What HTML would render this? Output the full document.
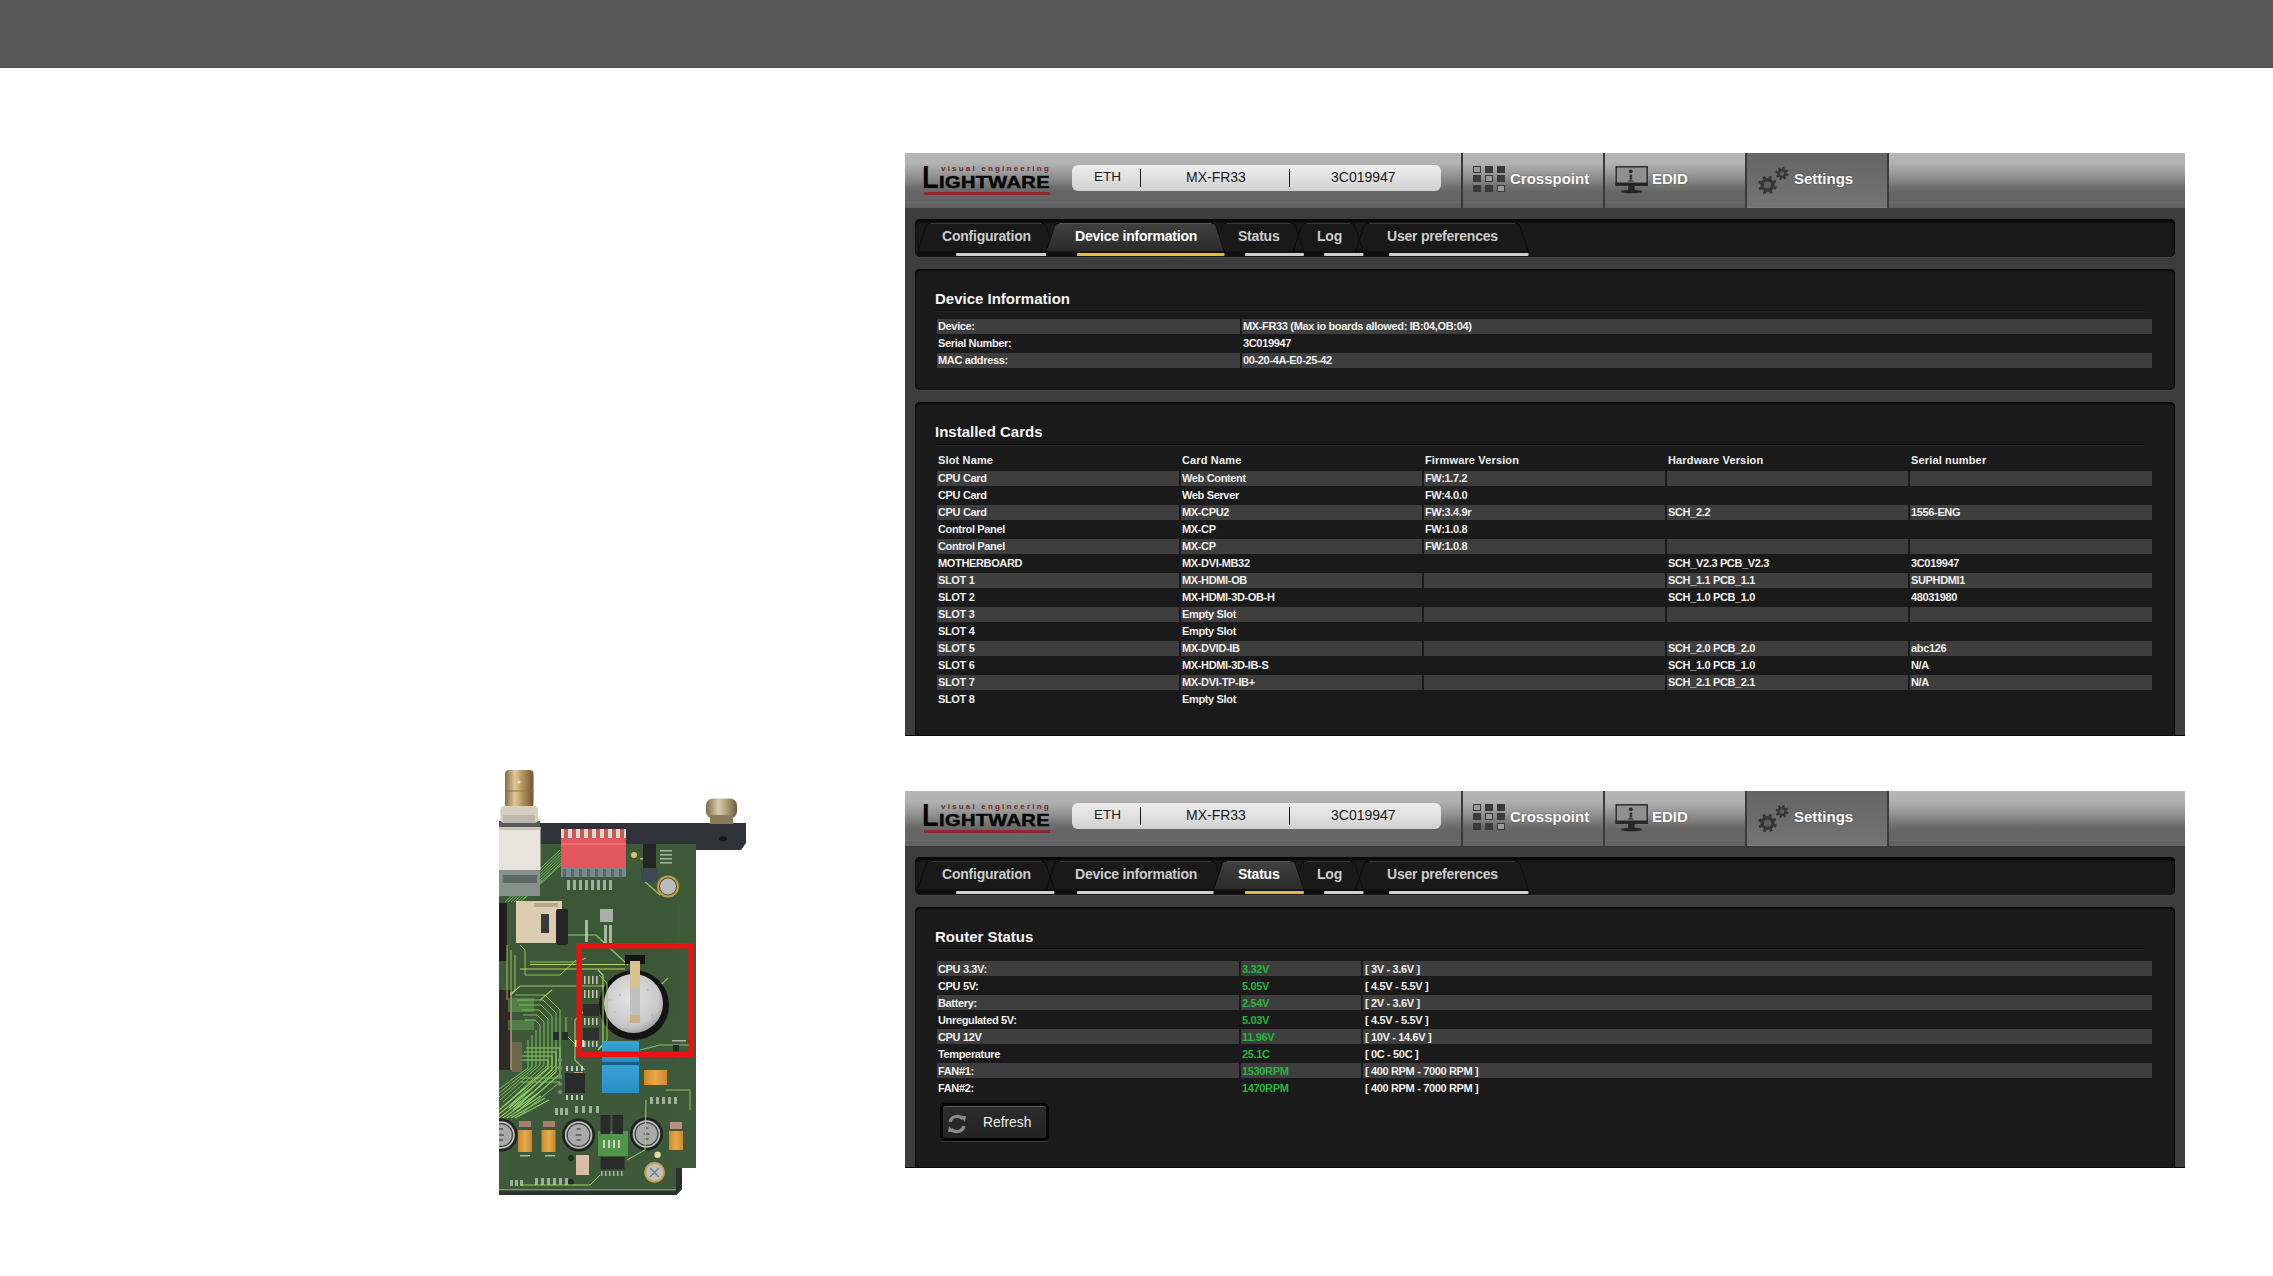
<!DOCTYPE html><html><head><meta charset="utf-8"><style>
*{margin:0;padding:0;box-sizing:border-box}
html,body{width:2273px;height:1276px;overflow:hidden;background:#fff}
body{position:relative;font-family:"Liberation Sans",sans-serif}
.abs{position:absolute}
.t{position:absolute;white-space:nowrap;line-height:1}
.hdr{background:linear-gradient(#b6b6b6 0%,#b2b2b2 18%,#9c9c9c 35%,#858585 50%,#707070 62%,#656565 72%,#646464 88%,#6c6c6c 89.5%,#636363 92%,#626262 100%)}
.sep{position:absolute;width:2px;background:#3a3a3a}
.pill{background:linear-gradient(#ececec 0%,#e2e2e2 45%,#cfcfcf 100%);border-radius:6px}
.navt{color:#fafafa;font-weight:bold;font-size:15px;text-shadow:0 0 2px rgba(0,0,0,.35)}
.tabbar{background:#191919;border-radius:5px;box-shadow:inset 0 3px 2px #060606,inset -1px 0 1px #0c0c0c,0 1px 0 #474747}
.tabt{font-weight:bold;font-size:14px;color:#d4d4d4;letter-spacing:-0.22px}
.panel{background:#1a1a1a;border-radius:5px;box-shadow:inset 0 2px 1px #090909,inset 1px 0 1px #0e0e0e,inset -1px 0 1px #0e0e0e,0 1px 0 #474747}
.h2{font-weight:bold;font-size:15px;color:#f4f4f4}
.rule{position:absolute;height:1px;background:#0c0c0c}
.bar{position:absolute;height:15px;background:#3e3e3e}
.ct{position:absolute;white-space:nowrap;line-height:1;font-weight:bold;font-size:11px;color:#f0f0f0;letter-spacing:-0.35px}
</style></head><body>

<div class="abs" style="left:0;top:0;width:2273px;height:67px;background:#575757"></div>
<div class="abs" style="left:0;top:67px;width:2273px;height:1px;background:#4d4d4d"></div>
<div class="abs" style="left:905px;top:153px;width:1280px;height:583px;background:#3c3c3c;overflow:hidden">
<div class="abs" style="left:-905px;top:-153px;width:2273px;height:1276px">
<div class="abs hdr" style="left:905px;top:153px;width:1280px;height:55px"></div>
<div class="t" style="left:922px;top:162px;font-weight:bold;font-size:31px;color:#050505;transform:scaleX(0.88);transform-origin:0 0">L</div>
<div class="t" style="left:939px;top:174px;font-weight:bold;font-size:16.5px;color:#080808;letter-spacing:0.3px;-webkit-text-stroke:0.5px #080808;transform:scaleX(1.215);transform-origin:0 0">IGHTWARE</div>
<div class="t" style="left:941px;top:165px;font-size:8px;color:#6a2a30;letter-spacing:2.2px;font-weight:bold">visual engineering</div>
<div class="abs" style="left:924px;top:192px;width:126px;height:3px;background:#8c2a30"></div>
<div class="abs pill" style="left:1072px;top:165px;width:369px;height:26px"></div>
<div class="abs" style="left:1140px;top:169px;width:1px;height:18px;background:#1a1a1a"></div>
<div class="abs" style="left:1289px;top:169px;width:1px;height:18px;background:#1a1a1a"></div>
<div class="t" style="left:1094px;top:170px;font-size:13.5px;color:#1a1a1a">ETH</div>
<div class="t" style="left:1186px;top:170px;font-size:14px;color:#1a1a1a">MX-FR33</div>
<div class="t" style="left:1331px;top:170px;font-size:14px;color:#1a1a1a">3C019947</div>
<div class="sep" style="left:1461px;top:153px;height:55px"></div>
<div class="sep" style="left:1603px;top:153px;height:55px"></div>
<div class="sep" style="left:1745px;top:153px;height:55px"></div>
<div class="sep" style="left:1887px;top:153px;height:55px"></div>
<div class="abs" style="left:1747px;top:153px;width:140px;height:55px;background:linear-gradient(#656565,#6e6e6e 60%,#747474);box-shadow:inset 0 -1px 0 #7a7a7a"></div>
<div class="abs" style="left:1473px;top:166.0px;width:8px;height:7px;border:1px solid #3a3a3a;background:#9a9a9a"></div>
<div class="abs" style="left:1485px;top:166.0px;width:8px;height:7px;background:#3a3a3a"></div>
<div class="abs" style="left:1497px;top:166.0px;width:8px;height:7px;background:#3a3a3a"></div>
<div class="abs" style="left:1473px;top:175.3px;width:8px;height:7px;background:#3a3a3a"></div>
<div class="abs" style="left:1485px;top:175.3px;width:8px;height:7px;border:1px solid #3a3a3a;background:#9a9a9a"></div>
<div class="abs" style="left:1497px;top:175.3px;width:8px;height:7px;background:#3a3a3a"></div>
<div class="abs" style="left:1473px;top:184.6px;width:8px;height:7px;background:#3a3a3a"></div>
<div class="abs" style="left:1485px;top:184.6px;width:8px;height:7px;background:#3a3a3a"></div>
<div class="abs" style="left:1497px;top:184.6px;width:8px;height:7px;border:1px solid #3a3a3a;background:#9a9a9a"></div>
<div class="t navt" style="left:1510px;top:171px">Crosspoint</div>
<svg class="abs" style="left:1615px;top:166px" width="33" height="28" viewBox="0 0 33 28"><rect x="1.2" y="0.8" width="31" height="18" fill="#909090" stroke="#262626" stroke-width="1.4"/><rect x="0.5" y="16.5" width="32.4" height="3.4" fill="#262626"/><rect x="13.2" y="19.5" width="6.5" height="5" fill="#262626"/><ellipse cx="16.5" cy="25.5" rx="10.8" ry="1.8" fill="#262626"/><circle cx="15.8" cy="5.3" r="1.9" fill="#2a2a2a"/><rect x="14.6" y="8.6" width="2.6" height="5" fill="#333"/><path d="M12 15.5 Q15.8 12.5 19.6 15.5 Z" fill="#2a2a2a"/></svg>
<div class="t navt" style="left:1652px;top:171px">EDID</div>
<svg class="abs" style="left:1756px;top:166px" width="36" height="30" viewBox="0 0 36 30"><g transform="rotate(20 11.5 19)"><g fill="#363636"><circle cx="11.5" cy="19" r="7"/></g><g stroke="#363636" stroke-width="3"><path d="M11.5 9.6V28.4M2.1 19H20.9M4.9 12.4L18.1 25.6M4.9 25.6L18.1 12.4"/></g></g><circle cx="11.5" cy="19" r="3.6" fill="#5e5e5e"/><g transform="rotate(15 26 7.5)"><circle cx="26" cy="7.5" r="4.6" fill="#363636"/><g stroke="#363636" stroke-width="2.4"><path d="M26 1V14M19.5 7.5H32.5M21.4 2.9L30.6 12.1M21.4 12.1L30.6 2.9"/></g></g><circle cx="26" cy="7.5" r="2.2" fill="#5e5e5e"/></svg>
<div class="t navt" style="left:1794px;top:171px">Settings</div>
<div class="abs tabbar" style="left:915px;top:219px;width:1260px;height:38px"></div>
<svg class="abs" style="left:905px;top:219px" width="1280" height="40" viewBox="905 219 1280 40"><defs><linearGradient id="tgI{ty}" x1="0" y1="0" x2="0" y2="1"><stop offset="0" stop-color="#2d2d2d"/><stop offset=".5" stop-color="#1f1f1f"/><stop offset="1" stop-color="#161616"/></linearGradient><linearGradient id="tgA219" x1="0" y1="0" x2="0" y2="1"><stop offset="0" stop-color="#404040"/><stop offset="1" stop-color="#2a2a2a"/></linearGradient></defs><path d="M1355.5,252 L1363.9,226.5 Q1365.0,223 1369.0,223 L1515.0,223 Q1519.0,223 1520.1,226.5 L1528.5,252 Z" fill="url(#tgI219)" stroke="#0b0b0b" stroke-width="1"/><path d="M1369.0,223.5 L1515.0,223.5" stroke="#3a3a3a" stroke-width="1"/><rect x="1355.5" y="252" width="173.0" height="4" fill="#0e0e0e"/><rect x="1389" y="253" width="139.5" height="3" rx="1" fill="#cfcfcf"/><path d="M1293.0,252 L1301.4,226.5 Q1302.5,223 1306.5,223 L1350.0,223 Q1354.0,223 1355.1,226.5 L1363.5,252 Z" fill="url(#tgI219)" stroke="#0b0b0b" stroke-width="1"/><path d="M1306.5,223.5 L1350.0,223.5" stroke="#3a3a3a" stroke-width="1"/><rect x="1293.0" y="252" width="70.5" height="4" fill="#0e0e0e"/><rect x="1324" y="253" width="39.5" height="3" rx="1" fill="#cfcfcf"/><path d="M1213.5,252 L1221.9,226.5 Q1223.0,223 1227.0,223 L1290.5,223 Q1294.5,223 1295.6,226.5 L1304.0,252 Z" fill="url(#tgI219)" stroke="#0b0b0b" stroke-width="1"/><path d="M1227.0,223.5 L1290.5,223.5" stroke="#3a3a3a" stroke-width="1"/><rect x="1213.5" y="252" width="90.5" height="4" fill="#0e0e0e"/><rect x="1245" y="253" width="59.0" height="3" rx="1" fill="#cfcfcf"/><path d="M917.5,252 L925.9,226.5 Q927.0,223 931.0,223 L1041.0,223 Q1045.0,223 1046.1,226.5 L1054.5,252 Z" fill="url(#tgI219)" stroke="#0b0b0b" stroke-width="1"/><path d="M931.0,223.5 L1041.0,223.5" stroke="#3a3a3a" stroke-width="1"/><rect x="917.5" y="252" width="137.0" height="4" fill="#0e0e0e"/><rect x="956" y="253" width="98.5" height="3" rx="1" fill="#cfcfcf"/><path d="M1046.0,252 L1054.4,226.5 Q1055.5,223 1059.5,223 L1211.0,223 Q1215.0,223 1216.1,226.5 L1224.5,252 Z" fill="url(#tgA219)" stroke="#0b0b0b" stroke-width="1"/><path d="M1059.5,223.5 L1211.0,223.5" stroke="#555" stroke-width="1"/><rect x="1046.0" y="252" width="178.5" height="4" fill="#0e0e0e"/><rect x="1077" y="253" width="147.5" height="3" rx="1" fill="#e6bb3c"/></svg>
<div class="t tabt" style="left:1387px;top:229px;color:#cccccc">User preferences</div>
<div class="t tabt" style="left:1317px;top:229px;color:#cccccc">Log</div>
<div class="t tabt" style="left:1238px;top:229px;color:#cccccc">Status</div>
<div class="t tabt" style="left:942px;top:229px;color:#cccccc">Configuration</div>
<div class="t tabt" style="left:1075px;top:229px;color:#ffffff">Device information</div>
<div class="abs panel" style="left:915px;top:269px;width:1260px;height:121px"></div>
<div class="t h2" style="left:935px;top:291px">Device Information</div>
<div class="rule" style="left:935px;top:310px;width:1209px"></div>
<div class="abs" style="left:935px;top:311px;width:1209px;height:1px;background:#2a2a2a"></div>
<div class="bar" style="left:937px;top:319px;width:303px"></div>
<div class="bar" style="left:1242px;top:319px;width:910px"></div>
<div class="ct" style="left:938px;top:321.4px">Device:</div>
<div class="ct" style="left:1243px;top:321.4px">MX-FR33 (Max io boards allowed: IB:04,OB:04)</div>
<div class="ct" style="left:938px;top:338.4px">Serial Number:</div>
<div class="ct" style="left:1243px;top:338.4px">3C019947</div>
<div class="bar" style="left:937px;top:353px;width:303px"></div>
<div class="bar" style="left:1242px;top:353px;width:910px"></div>
<div class="ct" style="left:938px;top:355.4px">MAC address:</div>
<div class="ct" style="left:1243px;top:355.4px">00-20-4A-E0-25-42</div>
<div class="abs panel" style="left:915px;top:402px;width:1260px;height:340px"></div>
<div class="t h2" style="left:935px;top:424px">Installed Cards</div>
<div class="rule" style="left:935px;top:444px;width:1209px"></div>
<div class="abs" style="left:935px;top:445px;width:1209px;height:1px;background:#262626"></div>
<div class="ct" style="left:938px;top:455px;letter-spacing:0.15px">Slot Name</div>
<div class="ct" style="left:1182px;top:455px;letter-spacing:0.15px">Card Name</div>
<div class="ct" style="left:1425px;top:455px;letter-spacing:0.15px">Firmware Version</div>
<div class="ct" style="left:1668px;top:455px;letter-spacing:0.15px">Hardware Version</div>
<div class="ct" style="left:1911px;top:455px;letter-spacing:0.15px">Serial number</div>
<div class="bar" style="left:937px;top:471px;width:242px"></div>
<div class="bar" style="left:1181px;top:471px;width:241px"></div>
<div class="bar" style="left:1424px;top:471px;width:241px"></div>
<div class="bar" style="left:1667px;top:471px;width:241px"></div>
<div class="bar" style="left:1910px;top:471px;width:242px"></div>
<div class="ct" style="left:938px;top:472.8px">CPU Card</div>
<div class="ct" style="left:1182px;top:472.8px">Web Content</div>
<div class="ct" style="left:1425px;top:472.8px">FW:1.7.2</div>
<div class="ct" style="left:938px;top:489.8px">CPU Card</div>
<div class="ct" style="left:1182px;top:489.8px">Web Server</div>
<div class="ct" style="left:1425px;top:489.8px">FW:4.0.0</div>
<div class="bar" style="left:937px;top:505px;width:242px"></div>
<div class="bar" style="left:1181px;top:505px;width:241px"></div>
<div class="bar" style="left:1424px;top:505px;width:241px"></div>
<div class="bar" style="left:1667px;top:505px;width:241px"></div>
<div class="bar" style="left:1910px;top:505px;width:242px"></div>
<div class="ct" style="left:938px;top:506.8px">CPU Card</div>
<div class="ct" style="left:1182px;top:506.8px">MX-CPU2</div>
<div class="ct" style="left:1425px;top:506.8px">FW:3.4.9r</div>
<div class="ct" style="left:1668px;top:506.8px">SCH_2.2</div>
<div class="ct" style="left:1911px;top:506.8px">1556-ENG</div>
<div class="ct" style="left:938px;top:523.8px">Control Panel</div>
<div class="ct" style="left:1182px;top:523.8px">MX-CP</div>
<div class="ct" style="left:1425px;top:523.8px">FW:1.0.8</div>
<div class="bar" style="left:937px;top:539px;width:242px"></div>
<div class="bar" style="left:1181px;top:539px;width:241px"></div>
<div class="bar" style="left:1424px;top:539px;width:241px"></div>
<div class="bar" style="left:1667px;top:539px;width:241px"></div>
<div class="bar" style="left:1910px;top:539px;width:242px"></div>
<div class="ct" style="left:938px;top:540.8px">Control Panel</div>
<div class="ct" style="left:1182px;top:540.8px">MX-CP</div>
<div class="ct" style="left:1425px;top:540.8px">FW:1.0.8</div>
<div class="ct" style="left:938px;top:557.8px">MOTHERBOARD</div>
<div class="ct" style="left:1182px;top:557.8px">MX-DVI-MB32</div>
<div class="ct" style="left:1668px;top:557.8px">SCH_V2.3 PCB_V2.3</div>
<div class="ct" style="left:1911px;top:557.8px">3C019947</div>
<div class="bar" style="left:937px;top:573px;width:242px"></div>
<div class="bar" style="left:1181px;top:573px;width:241px"></div>
<div class="bar" style="left:1424px;top:573px;width:241px"></div>
<div class="bar" style="left:1667px;top:573px;width:241px"></div>
<div class="bar" style="left:1910px;top:573px;width:242px"></div>
<div class="ct" style="left:938px;top:574.8px">SLOT 1</div>
<div class="ct" style="left:1182px;top:574.8px">MX-HDMI-OB</div>
<div class="ct" style="left:1668px;top:574.8px">SCH_1.1 PCB_1.1</div>
<div class="ct" style="left:1911px;top:574.8px">SUPHDMI1</div>
<div class="ct" style="left:938px;top:591.8px">SLOT 2</div>
<div class="ct" style="left:1182px;top:591.8px">MX-HDMI-3D-OB-H</div>
<div class="ct" style="left:1668px;top:591.8px">SCH_1.0 PCB_1.0</div>
<div class="ct" style="left:1911px;top:591.8px">48031980</div>
<div class="bar" style="left:937px;top:607px;width:242px"></div>
<div class="bar" style="left:1181px;top:607px;width:241px"></div>
<div class="bar" style="left:1424px;top:607px;width:241px"></div>
<div class="bar" style="left:1667px;top:607px;width:241px"></div>
<div class="bar" style="left:1910px;top:607px;width:242px"></div>
<div class="ct" style="left:938px;top:608.8px">SLOT 3</div>
<div class="ct" style="left:1182px;top:608.8px">Empty Slot</div>
<div class="ct" style="left:938px;top:625.8px">SLOT 4</div>
<div class="ct" style="left:1182px;top:625.8px">Empty Slot</div>
<div class="bar" style="left:937px;top:641px;width:242px"></div>
<div class="bar" style="left:1181px;top:641px;width:241px"></div>
<div class="bar" style="left:1424px;top:641px;width:241px"></div>
<div class="bar" style="left:1667px;top:641px;width:241px"></div>
<div class="bar" style="left:1910px;top:641px;width:242px"></div>
<div class="ct" style="left:938px;top:642.8px">SLOT 5</div>
<div class="ct" style="left:1182px;top:642.8px">MX-DVID-IB</div>
<div class="ct" style="left:1668px;top:642.8px">SCH_2.0 PCB_2.0</div>
<div class="ct" style="left:1911px;top:642.8px">abc126</div>
<div class="ct" style="left:938px;top:659.8px">SLOT 6</div>
<div class="ct" style="left:1182px;top:659.8px">MX-HDMI-3D-IB-S</div>
<div class="ct" style="left:1668px;top:659.8px">SCH_1.0 PCB_1.0</div>
<div class="ct" style="left:1911px;top:659.8px">N/A</div>
<div class="bar" style="left:937px;top:675px;width:242px"></div>
<div class="bar" style="left:1181px;top:675px;width:241px"></div>
<div class="bar" style="left:1424px;top:675px;width:241px"></div>
<div class="bar" style="left:1667px;top:675px;width:241px"></div>
<div class="bar" style="left:1910px;top:675px;width:242px"></div>
<div class="ct" style="left:938px;top:676.8px">SLOT 7</div>
<div class="ct" style="left:1182px;top:676.8px">MX-DVI-TP-IB+</div>
<div class="ct" style="left:1668px;top:676.8px">SCH_2.1 PCB_2.1</div>
<div class="ct" style="left:1911px;top:676.8px">N/A</div>
<div class="ct" style="left:938px;top:693.8px">SLOT 8</div>
<div class="ct" style="left:1182px;top:693.8px">Empty Slot</div>
</div></div>
<div class="abs" style="left:905px;top:735px;width:1280px;height:1px;background:#080808"></div>
<div class="abs" style="left:905px;top:791px;width:1280px;height:377px;background:#3c3c3c;overflow:hidden">
<div class="abs" style="left:-905px;top:-791px;width:2273px;height:1276px">
<div class="abs hdr" style="left:905px;top:791px;width:1280px;height:55px"></div>
<div class="t" style="left:922px;top:800px;font-weight:bold;font-size:31px;color:#050505;transform:scaleX(0.88);transform-origin:0 0">L</div>
<div class="t" style="left:939px;top:812px;font-weight:bold;font-size:16.5px;color:#080808;letter-spacing:0.3px;-webkit-text-stroke:0.5px #080808;transform:scaleX(1.215);transform-origin:0 0">IGHTWARE</div>
<div class="t" style="left:941px;top:803px;font-size:8px;color:#6a2a30;letter-spacing:2.2px;font-weight:bold">visual engineering</div>
<div class="abs" style="left:924px;top:830px;width:126px;height:3px;background:#8c2a30"></div>
<div class="abs pill" style="left:1072px;top:803px;width:369px;height:26px"></div>
<div class="abs" style="left:1140px;top:807px;width:1px;height:18px;background:#1a1a1a"></div>
<div class="abs" style="left:1289px;top:807px;width:1px;height:18px;background:#1a1a1a"></div>
<div class="t" style="left:1094px;top:808px;font-size:13.5px;color:#1a1a1a">ETH</div>
<div class="t" style="left:1186px;top:808px;font-size:14px;color:#1a1a1a">MX-FR33</div>
<div class="t" style="left:1331px;top:808px;font-size:14px;color:#1a1a1a">3C019947</div>
<div class="sep" style="left:1461px;top:791px;height:55px"></div>
<div class="sep" style="left:1603px;top:791px;height:55px"></div>
<div class="sep" style="left:1745px;top:791px;height:55px"></div>
<div class="sep" style="left:1887px;top:791px;height:55px"></div>
<div class="abs" style="left:1747px;top:791px;width:140px;height:55px;background:linear-gradient(#656565,#6e6e6e 60%,#747474);box-shadow:inset 0 -1px 0 #7a7a7a"></div>
<div class="abs" style="left:1473px;top:804.0px;width:8px;height:7px;border:1px solid #3a3a3a;background:#9a9a9a"></div>
<div class="abs" style="left:1485px;top:804.0px;width:8px;height:7px;background:#3a3a3a"></div>
<div class="abs" style="left:1497px;top:804.0px;width:8px;height:7px;background:#3a3a3a"></div>
<div class="abs" style="left:1473px;top:813.3px;width:8px;height:7px;background:#3a3a3a"></div>
<div class="abs" style="left:1485px;top:813.3px;width:8px;height:7px;border:1px solid #3a3a3a;background:#9a9a9a"></div>
<div class="abs" style="left:1497px;top:813.3px;width:8px;height:7px;background:#3a3a3a"></div>
<div class="abs" style="left:1473px;top:822.6px;width:8px;height:7px;background:#3a3a3a"></div>
<div class="abs" style="left:1485px;top:822.6px;width:8px;height:7px;background:#3a3a3a"></div>
<div class="abs" style="left:1497px;top:822.6px;width:8px;height:7px;border:1px solid #3a3a3a;background:#9a9a9a"></div>
<div class="t navt" style="left:1510px;top:809px">Crosspoint</div>
<svg class="abs" style="left:1615px;top:804px" width="33" height="28" viewBox="0 0 33 28"><rect x="1.2" y="0.8" width="31" height="18" fill="#909090" stroke="#262626" stroke-width="1.4"/><rect x="0.5" y="16.5" width="32.4" height="3.4" fill="#262626"/><rect x="13.2" y="19.5" width="6.5" height="5" fill="#262626"/><ellipse cx="16.5" cy="25.5" rx="10.8" ry="1.8" fill="#262626"/><circle cx="15.8" cy="5.3" r="1.9" fill="#2a2a2a"/><rect x="14.6" y="8.6" width="2.6" height="5" fill="#333"/><path d="M12 15.5 Q15.8 12.5 19.6 15.5 Z" fill="#2a2a2a"/></svg>
<div class="t navt" style="left:1652px;top:809px">EDID</div>
<svg class="abs" style="left:1756px;top:804px" width="36" height="30" viewBox="0 0 36 30"><g transform="rotate(20 11.5 19)"><g fill="#363636"><circle cx="11.5" cy="19" r="7"/></g><g stroke="#363636" stroke-width="3"><path d="M11.5 9.6V28.4M2.1 19H20.9M4.9 12.4L18.1 25.6M4.9 25.6L18.1 12.4"/></g></g><circle cx="11.5" cy="19" r="3.6" fill="#5e5e5e"/><g transform="rotate(15 26 7.5)"><circle cx="26" cy="7.5" r="4.6" fill="#363636"/><g stroke="#363636" stroke-width="2.4"><path d="M26 1V14M19.5 7.5H32.5M21.4 2.9L30.6 12.1M21.4 12.1L30.6 2.9"/></g></g><circle cx="26" cy="7.5" r="2.2" fill="#5e5e5e"/></svg>
<div class="t navt" style="left:1794px;top:809px">Settings</div>
<div class="abs tabbar" style="left:915px;top:857px;width:1260px;height:38px"></div>
<svg class="abs" style="left:905px;top:857px" width="1280" height="40" viewBox="905 857 1280 40"><defs><linearGradient id="tgI{ty}" x1="0" y1="0" x2="0" y2="1"><stop offset="0" stop-color="#2d2d2d"/><stop offset=".5" stop-color="#1f1f1f"/><stop offset="1" stop-color="#161616"/></linearGradient><linearGradient id="tgA857" x1="0" y1="0" x2="0" y2="1"><stop offset="0" stop-color="#404040"/><stop offset="1" stop-color="#2a2a2a"/></linearGradient></defs><path d="M1355.5,890 L1363.9,864.5 Q1365.0,861 1369.0,861 L1515.0,861 Q1519.0,861 1520.1,864.5 L1528.5,890 Z" fill="url(#tgI857)" stroke="#0b0b0b" stroke-width="1"/><path d="M1369.0,861.5 L1515.0,861.5" stroke="#3a3a3a" stroke-width="1"/><rect x="1355.5" y="890" width="173.0" height="4" fill="#0e0e0e"/><rect x="1389" y="891" width="139.5" height="3" rx="1" fill="#cfcfcf"/><path d="M1293.0,890 L1301.4,864.5 Q1302.5,861 1306.5,861 L1350.0,861 Q1354.0,861 1355.1,864.5 L1363.5,890 Z" fill="url(#tgI857)" stroke="#0b0b0b" stroke-width="1"/><path d="M1306.5,861.5 L1350.0,861.5" stroke="#3a3a3a" stroke-width="1"/><rect x="1293.0" y="890" width="70.5" height="4" fill="#0e0e0e"/><rect x="1324" y="891" width="39.5" height="3" rx="1" fill="#cfcfcf"/><path d="M1046.0,890 L1054.4,864.5 Q1055.5,861 1059.5,861 L1211.0,861 Q1215.0,861 1216.1,864.5 L1224.5,890 Z" fill="url(#tgI857)" stroke="#0b0b0b" stroke-width="1"/><path d="M1059.5,861.5 L1211.0,861.5" stroke="#3a3a3a" stroke-width="1"/><rect x="1046.0" y="890" width="178.5" height="4" fill="#0e0e0e"/><rect x="1077" y="891" width="147.5" height="3" rx="1" fill="#cfcfcf"/><path d="M917.5,890 L925.9,864.5 Q927.0,861 931.0,861 L1041.0,861 Q1045.0,861 1046.1,864.5 L1054.5,890 Z" fill="url(#tgI857)" stroke="#0b0b0b" stroke-width="1"/><path d="M931.0,861.5 L1041.0,861.5" stroke="#3a3a3a" stroke-width="1"/><rect x="917.5" y="890" width="137.0" height="4" fill="#0e0e0e"/><rect x="956" y="891" width="98.5" height="3" rx="1" fill="#cfcfcf"/><path d="M1213.5,890 L1221.9,864.5 Q1223.0,861 1227.0,861 L1290.5,861 Q1294.5,861 1295.6,864.5 L1304.0,890 Z" fill="url(#tgA857)" stroke="#0b0b0b" stroke-width="1"/><path d="M1227.0,861.5 L1290.5,861.5" stroke="#555" stroke-width="1"/><rect x="1213.5" y="890" width="90.5" height="4" fill="#0e0e0e"/><rect x="1245" y="891" width="59.0" height="3" rx="1" fill="#e6bb3c"/></svg>
<div class="t tabt" style="left:1387px;top:867px;color:#cccccc">User preferences</div>
<div class="t tabt" style="left:1317px;top:867px;color:#cccccc">Log</div>
<div class="t tabt" style="left:1075px;top:867px;color:#cccccc">Device information</div>
<div class="t tabt" style="left:942px;top:867px;color:#cccccc">Configuration</div>
<div class="t tabt" style="left:1238px;top:867px;color:#ffffff">Status</div>
<div class="abs panel" style="left:915px;top:907px;width:1260px;height:270px"></div>
<div class="t h2" style="left:935px;top:929px">Router Status</div>
<div class="rule" style="left:935px;top:948px;width:1209px"></div>
<div class="abs" style="left:935px;top:949px;width:1209px;height:1px;background:#262626"></div>
<div class="bar" style="left:937px;top:961px;width:302px"></div>
<div class="bar" style="left:1241px;top:961px;width:120px"></div>
<div class="bar" style="left:1363px;top:961px;width:789px"></div>
<div class="ct" style="left:938px;top:963.5px">CPU 3.3V:</div>
<div class="ct" style="left:1242px;top:963.5px;color:#27b43c">3.32V</div>
<div class="ct" style="left:1365px;top:963.5px">[ 3V - 3.6V ]</div>
<div class="ct" style="left:938px;top:980.5px">CPU 5V:</div>
<div class="ct" style="left:1242px;top:980.5px;color:#27b43c">5.05V</div>
<div class="ct" style="left:1365px;top:980.5px">[ 4.5V - 5.5V ]</div>
<div class="bar" style="left:937px;top:995px;width:302px"></div>
<div class="bar" style="left:1241px;top:995px;width:120px"></div>
<div class="bar" style="left:1363px;top:995px;width:789px"></div>
<div class="ct" style="left:938px;top:997.5px">Battery:</div>
<div class="ct" style="left:1242px;top:997.5px;color:#27b43c">2.54V</div>
<div class="ct" style="left:1365px;top:997.5px">[ 2V - 3.6V ]</div>
<div class="ct" style="left:938px;top:1014.5px">Unregulated 5V:</div>
<div class="ct" style="left:1242px;top:1014.5px;color:#27b43c">5.03V</div>
<div class="ct" style="left:1365px;top:1014.5px">[ 4.5V - 5.5V ]</div>
<div class="bar" style="left:937px;top:1029px;width:302px"></div>
<div class="bar" style="left:1241px;top:1029px;width:120px"></div>
<div class="bar" style="left:1363px;top:1029px;width:789px"></div>
<div class="ct" style="left:938px;top:1031.5px">CPU 12V</div>
<div class="ct" style="left:1242px;top:1031.5px;color:#27b43c">11.96V</div>
<div class="ct" style="left:1365px;top:1031.5px">[ 10V - 14.6V ]</div>
<div class="ct" style="left:938px;top:1048.5px">Temperature</div>
<div class="ct" style="left:1242px;top:1048.5px;color:#27b43c">25.1C</div>
<div class="ct" style="left:1365px;top:1048.5px">[ 0C - 50C ]</div>
<div class="bar" style="left:937px;top:1063px;width:302px"></div>
<div class="bar" style="left:1241px;top:1063px;width:120px"></div>
<div class="bar" style="left:1363px;top:1063px;width:789px"></div>
<div class="ct" style="left:938px;top:1065.5px">FAN#1:</div>
<div class="ct" style="left:1242px;top:1065.5px;color:#27b43c">1530RPM</div>
<div class="ct" style="left:1365px;top:1065.5px">[ 400 RPM - 7000 RPM ]</div>
<div class="ct" style="left:938px;top:1082.5px">FAN#2:</div>
<div class="ct" style="left:1242px;top:1082.5px;color:#27b43c">1470RPM</div>
<div class="ct" style="left:1365px;top:1082.5px">[ 400 RPM - 7000 RPM ]</div>
<div class="abs" style="left:940px;top:1103px;width:109px;height:38px;background:#050505;border-radius:5px"></div>
<div class="abs" style="left:943px;top:1106px;width:103px;height:32px;background:linear-gradient(#2c2c2c,#232323);border-radius:3px;box-shadow:inset 0 1px 0 #5a5a5a"></div>
<div class="abs" style="left:941px;top:1141px;width:107px;height:1px;background:#3a3a3a"></div>
<svg class="abs" style="left:946px;top:1113px" width="22" height="22" viewBox="0 0 22 22"><g fill="none" stroke="#8a8a8a" stroke-width="3.2"><path d="M4 9A7.5 7.5 0 0 1 17 6"/><path d="M18 13A7.5 7.5 0 0 1 5 16"/></g><path d="M14 3L20 3L19 9Z" fill="#8a8a8a"/><path d="M8 19L2 19L3 13Z" fill="#8a8a8a"/></svg>
<div class="t" style="left:983px;top:1116px;font-size:13.8px;color:#ececec">Refresh</div>
</div></div>
<div class="abs" style="left:905px;top:1167px;width:1280px;height:1px;background:#080808"></div>

<svg class="abs" style="left:490px;top:760px" width="270" height="445" viewBox="490 760 270 445">
<defs>
<linearGradient id="gold" x1="0" y1="0" x2="1" y2="0"><stop offset="0" stop-color="#8a6e40"/><stop offset=".35" stop-color="#e0c89a"/><stop offset=".6" stop-color="#b89660"/><stop offset="1" stop-color="#6e5430"/></linearGradient>
<linearGradient id="brass" x1="0" y1="0" x2="1" y2="0"><stop offset="0" stop-color="#7a6a48"/><stop offset=".4" stop-color="#d8ccaa"/><stop offset=".7" stop-color="#a89870"/><stop offset="1" stop-color="#6a5a40"/></linearGradient>
<radialGradient id="coin" cx=".45" cy=".4" r=".6"><stop offset="0" stop-color="#e4e4e4"/><stop offset=".8" stop-color="#c8c8c8"/><stop offset="1" stop-color="#a8a8a8"/></radialGradient>
<radialGradient id="ind" cx=".5" cy=".5" r=".5"><stop offset="0" stop-color="#8a8a8a"/><stop offset=".7" stop-color="#b4b4b4"/><stop offset=".85" stop-color="#444"/><stop offset="1" stop-color="#222"/></radialGradient>
<linearGradient id="blue" x1="0" y1="0" x2="0" y2="1"><stop offset="0" stop-color="#3aa2d4"/><stop offset="1" stop-color="#2c8cc4"/></linearGradient>
<linearGradient id="tant" x1="0" y1="0" x2="1" y2="0"><stop offset="0" stop-color="#c88a30"/><stop offset=".5" stop-color="#eaa848"/><stop offset="1" stop-color="#c88a30"/></linearGradient>
<clipPath id="board"><path d="M499 844 L696 844 L696 1168 L682 1168 L682 1189 L676 1195 L499 1195 Z"/></clipPath>
</defs>
<!-- board -->
<path d="M499 844 L696 844 L696 1168 L682 1168 L682 1189 L676 1195 L499 1195 Z" fill="#3e5a3a"/>
<g clip-path="url(#board)">
  <!-- darker bottom edge -->
  <rect x="499" y="1190" width="200" height="6" fill="#2a342c"/>
  <rect x="499" y="1189" width="180" height="1.5" fill="#9ab89a" opacity=".6"/>
  <rect x="676" y="1168" width="6" height="27" fill="#283028"/>
  <!-- left dark connector strips -->
  <rect x="499" y="903" width="8" height="58" fill="#1e1e1e"/>
  <rect x="499" y="990" width="12" height="80" fill="#2e2a26"/>
  <rect x="510" y="992" width="2" height="78" fill="#c89a8a" opacity=".7"/>
  <!-- diagonal traces top-left -->
  <g stroke="#8acc66" stroke-width="0.9" opacity=".85">
    <path d="M505 902 L560 850"/><path d="M508 902 L563 850"/><path d="M511 902 L566 850"/><path d="M514 902 L569 850"/><path d="M517 902 L572 850"/><path d="M520 902 L575 850"/><path d="M523 900 L577 850"/>
    <path d="M499 877 L540 877"/><path d="M499 881 L542 881"/><path d="M499 885 L538 885"/><path d="M499 889 L534 889"/><path d="M499 893 L530 893"/>
  </g>
  <!-- gray area under white block -->
  <rect x="499" y="870" width="41" height="26" fill="#86928c"/>
  <rect x="503" y="875" width="34" height="8" fill="#5e6a66"/>
  <!-- bright band -->
  <g stroke="#9ad86e" stroke-width="1.1" fill="none" opacity=".95">
    <path d="M520 1060 L548 1060 L548 1068 L505 1105"/><path d="M522 1056 L552 1056 L552 1070 L509 1108"/><path d="M524 1052 L556 1052 L556 1072 L513 1110"/><path d="M526 1048 L560 1048 L560 1074 L517 1112"/>
    <path d="M499 1110 L525 1088"/><path d="M499 1114 L529 1090"/><path d="M499 1118 L533 1092"/><path d="M503 1118 L537 1094"/><path d="M507 1118 L541 1096"/><path d="M511 1118 L545 1098"/><path d="M515 1118 L549 1100"/>
  </g>
  <rect x="508" y="998" width="26" height="14" fill="#6aa85a" opacity=".5"/>
  <rect x="508" y="1020" width="26" height="10" fill="#6aa85a" opacity=".45"/>
  <!-- big trace fan left -->
  <g stroke="#86c85e" stroke-width="1" fill="none" opacity=".9">
    <path d="M515 995 L545 995 L560 1010 L560 1065 L515 1110"/>
    <path d="M517 1000 L543 1000 L556 1013 L556 1065 L512 1108"/>
    <path d="M519 1005 L541 1005 L552 1016 L552 1065 L509 1106"/>
    <path d="M521 1010 L539 1010 L548 1019 L548 1065 L506 1104"/>
    <path d="M523 1015 L537 1015 L544 1022 L544 1065 L503 1102"/>
    <path d="M525 1020 L535 1020 L540 1025 L540 1065 L500 1100"/>
    <path d="M536 1030 L536 1066 L499 1097"/>
    <path d="M532 1035 L532 1067 L499 1093"/>
    <path d="M528 1040 L528 1068 L499 1089"/>
    <path d="M520 1082 L560 1082 L520 1115"/><path d="M520 1078 L562 1078"/>
  </g>
  <rect x="512" y="1042" width="10" height="30" fill="#7a6a50" opacity=".8"/>
  <!-- long horizontal traces -->
  <g stroke="#a8d870" stroke-width="1.2" fill="none" opacity=".85">
    <path d="M530 962 L576 962 L586 958"/>
    <path d="M512 993 L520 986 L660 986 L668 978"/>
    <path d="M540 1000 L552 990"/>
    <path d="M566 935 L596 935 L628 965"/>
    <path d="M643 880 L660 895"/>
    <path d="M590 1005 L575 1020 L575 1060 L585 1070"/>
  </g>
  <!-- small components rows -->
  <g fill="#c0ccc0" opacity=".75">
    <rect x="567" y="880" width="3" height="10"/><rect x="573" y="880" width="3" height="10"/><rect x="579" y="880" width="3" height="10"/><rect x="585" y="880" width="3" height="10"/><rect x="591" y="880" width="3" height="10"/><rect x="597" y="880" width="3" height="10"/><rect x="603" y="880" width="3" height="10"/><rect x="609" y="880" width="3" height="10"/>
    <rect x="555" y="1108" width="3" height="7"/><rect x="560" y="1108" width="3" height="7"/><rect x="565" y="1108" width="3" height="7"/><rect x="575" y="1106" width="3" height="7"/><rect x="582" y="1106" width="3" height="7"/><rect x="589" y="1106" width="3" height="7"/><rect x="596" y="1106" width="3" height="7"/>
    <rect x="510" y="1180" width="3" height="6"/><rect x="515" y="1180" width="3" height="6"/><rect x="520" y="1180" width="3" height="6"/><rect x="535" y="1178" width="3" height="7"/><rect x="541" y="1178" width="3" height="7"/><rect x="547" y="1178" width="3" height="7"/><rect x="553" y="1178" width="3" height="7"/><rect x="559" y="1178" width="3" height="7"/><rect x="565" y="1178" width="3" height="7"/>
    <rect x="650" y="1097" width="3" height="7"/><rect x="656" y="1097" width="3" height="7"/><rect x="662" y="1097" width="3" height="7"/><rect x="668" y="1097" width="3" height="7"/><rect x="674" y="1097" width="3" height="7"/>
  </g>
  <g stroke="#b8d868" stroke-width="1" fill="none" opacity=".8">
    <path d="M507 945 L507 1000"/><path d="M511 950 L511 995 L520 986"/><path d="M515 955 L515 990"/>
    <path d="M520 945 L525 950 L525 975 L560 975 L576 960"/>
    <path d="M566 1017 L566 1035 L576 1045"/>
    <path d="M640 1050 L660 1045 L690 1045"/><path d="M650 1055 L690 1055"/>
    <path d="M666 1090 L690 1090 L690 1110"/>
  </g>
  <g fill="#d8dcc8" opacity=".7">
    <rect x="640" y="858" width="8" height="1.5"/><rect x="660" y="850" width="12" height="1.5"/><rect x="660" y="854" width="12" height="1.5"/><rect x="660" y="858" width="12" height="1.5"/><rect x="660" y="862" width="12" height="1.5"/>
    <rect x="604" y="925" width="3" height="18"/><rect x="609" y="925" width="3" height="18"/><rect x="585" y="920" width="3" height="22"/>
    <rect x="672" y="1040" width="14" height="1.5"/><rect x="520" y="1155" width="10" height="1.5"/><rect x="545" y="1155" width="10" height="1.5"/>
  </g>
  <!-- microSD -->
  <rect x="516" y="901" width="46" height="42" fill="#dccdb0"/>
  <rect x="534" y="903" width="24" height="4" fill="#b8a88a"/>
  <rect x="541" y="914" width="8" height="19" fill="#3a3a3a"/>
  <rect x="556" y="909" width="12" height="36" rx="2" fill="#242424"/>
  <rect x="600" y="909" width="13" height="13" fill="#a8b0a8"/>
  <!-- screw top -->
  <circle cx="668" cy="886.5" r="11" fill="#c8a040"/><circle cx="668" cy="886.5" r="9" fill="#3a4a3a"/><circle cx="668" cy="886.5" r="8" fill="#b8bcbc"/>
  <circle cx="634" cy="855" r="3" fill="#e0c060"/>
  <!-- jumper -->
  <rect x="643" y="832" width="13" height="50" fill="#242424"/>
  <rect x="641" y="868" width="17" height="14" fill="#3a4a50"/>
  <!-- battery -->
  <circle cx="634" cy="1005" r="35" fill="#141414"/>
  <circle cx="633.5" cy="1003.5" r="29.5" fill="url(#coin)"/>
  <g fill="#a8a8a8" opacity=".5"><circle cx="620" cy="995" r="1.2"/><circle cx="648" cy="990" r="1.4"/><circle cx="615" cy="1012" r="1"/><circle cx="652" cy="1015" r="1.2"/><circle cx="628" cy="1025" r="1"/><circle cx="645" cy="1028" r="1.3"/><circle cx="610" cy="1000" r="1"/></g>
  <rect x="625" y="955" width="20" height="9" fill="#141414"/>
  <rect x="630" y="961" width="10" height="27" fill="#d8c090"/>
  <rect x="630" y="988" width="10" height="28" fill="#c0c0c0"/>
  <rect x="630" y="1015" width="10" height="8" fill="#c8b080"/>
  <!-- chips near battery -->
  <rect x="583" y="1004" width="16" height="12" fill="#2e302e"/>
  <rect x="583" y="1028" width="16" height="12" fill="#2e302e"/>
  <g fill="#d8d8c8" opacity=".85"><rect x="584" y="976" width="1.6" height="8"/><rect x="588" y="976" width="1.6" height="8"/><rect x="592" y="976" width="1.6" height="8"/><rect x="596" y="976" width="1.6" height="8"/><rect x="584" y="990" width="1.6" height="8"/><rect x="588" y="990" width="1.6" height="8"/><rect x="592" y="990" width="1.6" height="8"/><rect x="596" y="990" width="1.6" height="8"/><rect x="584" y="1018" width="1.6" height="7"/><rect x="588" y="1018" width="1.6" height="7"/><rect x="592" y="1018" width="1.6" height="7"/><rect x="596" y="1018" width="1.6" height="7"/><rect x="584" y="1041" width="1.6" height="6"/><rect x="588" y="1041" width="1.6" height="6"/><rect x="592" y="1041" width="1.6" height="6"/><rect x="596" y="1041" width="1.6" height="6"/></g>
  <g stroke="#c8e070" stroke-width="1.1" fill="none" opacity=".9"><path d="M530 964.5 L625 964.5"/><path d="M520 969 L625 969"/><path d="M598 970 L603 975 L603 1045 L598 1050"/></g>
  <path d="M599 975 L607 983 L607 1040 L599 1048" stroke="#8ac860" stroke-width="1" fill="none"/>
  <!-- blue caps -->
  <rect x="602" y="1041" width="37" height="21" fill="url(#blue)"/>
  <rect x="602" y="1065" width="37" height="28" fill="url(#blue)"/>
  <rect x="602" y="1062" width="37" height="3" fill="#1e5a88"/>
  <rect x="644" y="1070" width="23" height="15" fill="url(#tant)"/>
  <rect x="575" y="1040" width="9" height="7" fill="#e8e0d0"/>
  <rect x="574" y="1072" width="9" height="12" fill="#c8a060"/>
  <!-- IC left mid -->
  <rect x="565" y="1073" width="20" height="20" fill="#2a2a2a"/>
  <g fill="#e0e0e0" opacity=".8"><rect x="566" y="1066" width="2" height="5"/><rect x="571" y="1066" width="2" height="5"/><rect x="576" y="1066" width="2" height="5"/><rect x="581" y="1066" width="2" height="5"/><rect x="566" y="1095" width="2" height="5"/><rect x="571" y="1095" width="2" height="5"/><rect x="576" y="1095" width="2" height="5"/><rect x="581" y="1095" width="2" height="5"/></g>
  <g fill="#7a8a7a"><circle cx="560" cy="1060" r="2"/><circle cx="560" cy="1068" r="2"/><circle cx="560" cy="1076" r="2"/><circle cx="560" cy="1084" r="2"/><circle cx="560" cy="1092" r="2"/></g>
  <!-- small black parts -->
  <rect x="553" y="1032" width="6" height="8" fill="#2a2a2a"/><rect x="562" y="1032" width="6" height="8" fill="#2a2a2a"/>
  <rect x="673" y="1045" width="6" height="8" fill="#2a2a2a"/>
  <!-- inductors -->
  <circle cx="501" cy="1135" r="16.5" fill="#1c221c"/><circle cx="501" cy="1135" r="13.8" fill="#bdbdbd"/><circle cx="501" cy="1135" r="12" fill="#3a3a3a"/><circle cx="501" cy="1135" r="10.8" fill="#a9a9a9"/><path d="M499 1129 L503 1129 M498 1135 L504 1135 M499 1140 L503 1140" stroke="#555" stroke-width="1.5"/>
  <circle cx="578.6" cy="1135" r="16.5" fill="#1c221c"/><circle cx="578.6" cy="1135" r="13.8" fill="#bdbdbd"/><circle cx="578.6" cy="1135" r="12" fill="#3a3a3a"/><circle cx="578.6" cy="1135" r="10.8" fill="#a9a9a9"/><path d="M576.6 1129 L580.6 1129 M575.6 1135 L581.6 1135 M576.6 1140 L580.6 1140" stroke="#555" stroke-width="1.5"/>
  <circle cx="646.5" cy="1134" r="16.5" fill="#1c221c"/><circle cx="646.5" cy="1134" r="13.8" fill="#bdbdbd"/><circle cx="646.5" cy="1134" r="12" fill="#3a3a3a"/><circle cx="646.5" cy="1134" r="10.8" fill="#a9a9a9"/><path d="M644.5 1128 L648.5 1128 M643.5 1134 L649.5 1134 M644.5 1139 L648.5 1139" stroke="#555" stroke-width="1.5"/>

  <!-- tantalum -->
  <rect x="518" y="1130" width="14" height="22" fill="url(#tant)"/><rect x="519" y="1121" width="12" height="6" fill="#a88070"/>
  <rect x="541.5" y="1130" width="14" height="22" fill="url(#tant)"/><rect x="543" y="1121" width="12" height="6" fill="#a88070"/>
  <rect x="669" y="1131" width="14" height="19" fill="url(#tant)"/><rect x="670" y="1122" width="12" height="7" fill="#b89080"/>
  <!-- center bottom chips -->
  <rect x="598" y="1131" width="30" height="25" fill="#5aa850" opacity=".75"/>
  <rect x="600.5" y="1115" width="10" height="19" fill="#2a2a2a"/>
  <rect x="612.5" y="1115" width="10.5" height="19" fill="#2a2a2a"/>
  <g fill="#e8e8d8" opacity=".8"><rect x="603" y="1140" width="2" height="8"/><rect x="608" y="1140" width="2" height="8"/><rect x="613" y="1140" width="2" height="8"/><rect x="618" y="1140" width="2" height="8"/></g>
  <rect x="600.5" y="1157" width="24" height="12.5" fill="#2a2a2a"/>
  <g fill="#d8d8c8" opacity=".7"><rect x="601" y="1171" width="1.5" height="5"/><rect x="605" y="1171" width="1.5" height="5"/><rect x="609" y="1171" width="1.5" height="5"/><rect x="613" y="1171" width="1.5" height="5"/><rect x="617" y="1171" width="1.5" height="5"/><rect x="621" y="1171" width="1.5" height="5"/></g>
  <rect x="576" y="1155" width="13" height="20" fill="#d8bca8"/>
  <circle cx="571" cy="1158" r="3" fill="#242a24"/><circle cx="571" cy="1182" r="3" fill="#242a24"/>
  <path d="M627 1160 L645 1150 L646 1100" stroke="#9ad06a" stroke-width="1" fill="none"/>
  <path d="M520 1185 L590 1185 L600 1175" stroke="#9ad06a" stroke-width="1" fill="none"/>
  <!-- bottom screw -->
  <circle cx="657.6" cy="1154.7" r="3.2" fill="#e8d8a0"/>
  <circle cx="654.6" cy="1172.3" r="10.5" fill="#c8a040"/><circle cx="654.6" cy="1172.3" r="8.5" fill="#bfc0c0"/>
  <path d="M650 1168 L659 1177 M659 1168 L650 1177" stroke="#7a7a7a" stroke-width="1.4"/>
</g>
<!-- bracket -->
<path d="M540 823 L746 823 L746 843 L741 850 L696 850 L696 844 L540 844 Z" fill="#30333a"/>
<rect x="499" y="821" width="41" height="7" fill="#55585c"/>
<ellipse cx="723" cy="839" rx="4" ry="2.5" fill="#15181c"/>
<!-- DIP switch -->
<rect x="561" y="829" width="65" height="14" fill="#e4d4d0"/>
<g fill="#c85a5e"><rect x="564" y="829" width="4" height="9"/><rect x="572" y="829" width="4" height="9"/><rect x="580" y="829" width="4" height="9"/><rect x="588" y="829" width="4" height="9"/><rect x="596" y="829" width="4" height="9"/><rect x="604" y="829" width="4" height="9"/><rect x="612" y="829" width="4" height="9"/><rect x="620" y="829" width="4" height="9"/></g>
<rect x="561" y="838" width="65" height="30" fill="#e2585c"/>
<rect x="561" y="843" width="65" height="2" fill="#f07a7e" opacity=".6"/>
<rect x="561" y="868" width="65" height="9" fill="#7a8890"/>
<g fill="#5a6870"><rect x="563" y="869" width="3" height="8"/><rect x="571" y="869" width="3" height="8"/><rect x="579" y="869" width="3" height="8"/><rect x="587" y="869" width="3" height="8"/><rect x="595" y="869" width="3" height="8"/><rect x="603" y="869" width="3" height="8"/><rect x="611" y="869" width="3" height="8"/><rect x="619" y="869" width="3" height="8"/></g>
<!-- BNC -->
<rect x="505" y="770" width="28.5" height="38" rx="4" fill="url(#gold)"/>
<rect x="505" y="790" width="28.5" height="2" fill="#8a7048" opacity=".5"/>
<circle cx="519" cy="782" r="1.5" fill="#f0e8d0"/>
<rect x="500.5" y="806" width="37.5" height="17" rx="4" fill="#d6d0c4"/>
<rect x="503" y="815" width="32" height="8" fill="#bdb7aa"/>
<rect x="499" y="827" width="41.5" height="43" fill="#e8e4dc"/>
<rect x="499" y="827" width="41.5" height="3" fill="#c8c4bc"/>
<!-- thumbscrew -->
<rect x="706" y="798.5" width="31" height="20" rx="7" fill="url(#brass)"/>
<rect x="710" y="815" width="23" height="9" fill="#8a7a58"/>
<!-- red rectangle -->
<rect x="579.25" y="945.75" width="112" height="108.5" fill="none" stroke="#ec1010" stroke-width="5.5"/>
</svg>

</body></html>
